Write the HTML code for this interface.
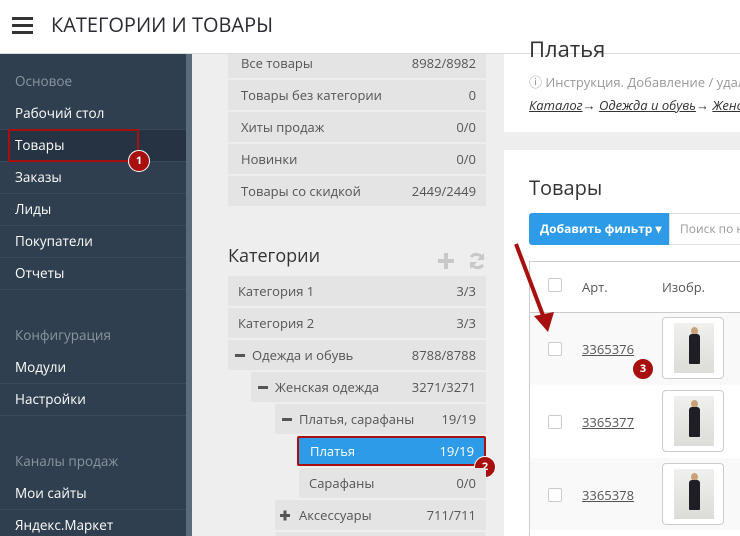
<!DOCTYPE html>
<html><head><meta charset="utf-8"><style>
*{box-sizing:border-box;margin:0;padding:0}
html{width:740px;height:536px;overflow:hidden}
body{width:740px;height:536px;overflow:hidden;background:#eeeeee;font-family:"Open Sans","Liberation Sans",sans-serif;position:relative;color:#333}
.a{position:absolute}
.hdr{left:0;top:0;width:740px;height:54px;background:#fff;border-bottom:1px solid #ddd;z-index:5}
.side{left:0;top:54px;width:186px;height:482px;background:#2f3f4f}
.scr{left:186px;top:54px;width:6px;height:482px;background:#5a6b7b}
.si{position:absolute;left:0;width:186px;height:32px;line-height:31px;padding-left:15px;color:#fff;font-size:13.5px;border-bottom:1px solid #3b4b5b}
.sh{position:absolute;left:15px;color:#8b959f;font-size:13.5px}
.row{position:absolute;height:30px;background:#e4e4e4;font-size:13px;color:#555;line-height:30px;padding:0 10px;border-radius:2px}
.row span{float:right}
.row b{display:inline-block;width:10px;height:3px;background:#555;vertical-align:middle;margin:0 7px 2px 2px}
.badge{position:absolute;width:22px;height:22px;border-radius:50%;background:#a8100f;color:#fff;font-size:11px;font-weight:bold;text-align:center;line-height:20px;border:1px solid #fff}
.cb{position:absolute;width:14px;height:14px;border:1px solid #ccc;border-radius:2px;background:#fff}
.lnk{position:absolute;font-size:13px;color:#555;text-decoration:underline}
.img{position:absolute;width:62px;height:62px;border:1px solid #ccc;border-radius:4px;background:#fff}
.img i{position:absolute;left:11px;top:5px;width:40px;height:50px;background:linear-gradient(180deg,#f0f0ee,#dcdcd8)}
.img i:before{content:"";position:absolute;left:17px;top:4px;width:7px;height:8px;border-radius:50%;background:#c9a27a}
.img i:after{content:"";position:absolute;left:15px;top:11px;width:11px;height:30px;background:#1e1e24;border-radius:3px 3px 1px 1px}
</style></head><body>
<div class="a hdr"></div>
<div class="a" style="left:529px;top:34px;font-size:22px;color:#333;z-index:6">Платья</div>
<div class="a" style="left:12px;top:17px;width:21px;height:3px;background:#333;box-shadow:0 7px 0 #333,0 14px 0 #333;z-index:6"></div>
<div class="a" style="left:51px;top:11px;font-size:20px;color:#2a2a33;z-index:6">КАТЕГОРИИ И ТОВАРЫ</div>

<div class="a side">
<div class="sh" style="top:18px">Основое</div>
<div class="si" style="top:44px">Рабочий стол</div>
<div class="si" style="top:76px;background:#253342">Товары</div>
<div class="si" style="top:108px">Заказы</div>
<div class="si" style="top:140px">Лиды</div>
<div class="si" style="top:172px">Покупатели</div>
<div class="si" style="top:204px">Отчеты</div>
<div class="sh" style="top:272px">Конфигурация</div>
<div class="si" style="top:298px">Модули</div>
<div class="si" style="top:330px">Настройки</div>
<div class="sh" style="top:398px">Каналы продаж</div>
<div class="si" style="top:424px">Мои сайты</div>
<div class="si" style="top:456px;border:none">Яндекс.Маркет</div>
</div>
<div class="a scr"></div>
<div class="a" style="left:8px;top:129px;width:131px;height:33px;border:2px solid #a8100f"></div>
<div class="badge" style="left:128px;top:150px">1</div>

<div class="row" style="left:228px;top:48px;width:258px;padding-left:13px">Все товары<span>8982/8982</span></div>
<div class="row" style="left:228px;top:80px;width:258px;padding-left:13px">Товары без категории<span>0</span></div>
<div class="row" style="left:228px;top:112px;width:258px;padding-left:13px">Хиты продаж<span>0/0</span></div>
<div class="row" style="left:228px;top:144px;width:258px;padding-left:13px">Новинки<span>0/0</span></div>
<div class="row" style="left:228px;top:176px;width:258px;padding-left:13px">Товары со скидкой<span>2449/2449</span></div>

<div class="a" style="left:228px;top:244px;font-size:18px;color:#333">Категории</div>
<svg class="a" style="left:437px;top:252px" width="18" height="18"><path d="M9 1v16M1 9h16" stroke="#c8c8c8" stroke-width="4"/></svg>
<svg class="a" style="left:467px;top:251px" width="20" height="20" viewBox="0 0 20 20"><path d="M16 8A7 7 0 0 0 4 6M4 12a7 7 0 0 0 12 2" fill="none" stroke="#c8c8c8" stroke-width="3"/><path d="M17 2v7h-7zM3 18v-7h7z" fill="#c8c8c8"/></svg>

<div class="row" style="left:228px;top:276px;width:258px">Категория 1<span>3/3</span></div>
<div class="row" style="left:228px;top:308px;width:258px">Категория 2<span>3/3</span></div>
<div class="row" style="left:228px;top:340px;width:258px;padding-left:5px"><b></b>Одежда и обувь<span>8788/8788</span></div>
<div class="row" style="left:251px;top:372px;width:235px;padding-left:5px"><b></b>Женская одежда<span>3271/3271</span></div>
<div class="row" style="left:275px;top:404px;width:211px;padding-left:5px"><b></b>Платья, сарафаны<span>19/19</span></div>
<div class="row" style="left:297px;top:436px;width:189px;background:#2d9be8;color:#fff;border:2px solid #a8100f;padding-left:11px;line-height:26px">Платья<span>19/19</span></div>
<div class="badge" style="left:474px;top:456px">2</div>
<div class="row" style="left:299px;top:468px;width:187px;padding-left:10px">Сарафаны<span>0/0</span></div>
<div class="row" style="left:275px;top:500px;width:211px;padding-left:5px"><b style="background:none;position:relative"><b style="position:absolute;left:-2px;top:0;margin:0"></b><b style="position:absolute;left:-2px;top:0;margin:0;transform:rotate(90deg)"></b></b>Аксессуары<span>711/711</span></div>
<div class="row" style="left:275px;top:532px;width:211px;height:4px"></div>

<div class="a" style="left:504px;top:54px;width:236px;height:78px;background:#fff"></div>
<div class="a" style="left:529px;top:72px;font-size:13px;color:#999;white-space:nowrap">ⓘ Инструкция. Добавление / удаление</div>
<div class="a" style="left:529px;top:96px;font-size:13px;color:#333;font-style:italic;white-space:nowrap"><u>Каталог</u>→ <u>Одежда и обувь</u>→ <u>Женская</u></div>

<div class="a" style="left:504px;top:150px;width:236px;height:386px;background:#fff"></div>
<div class="a" style="left:529px;top:174px;font-size:20px;color:#333">Товары</div>
<div class="a" style="left:529px;top:213px;width:140px;height:32px;background:#2d9be8;border-radius:3px 0 0 3px;color:#fff;font-size:12px;font-weight:bold;line-height:32px;padding-left:11px">Добавить фильтр ▾</div>
<div class="a" style="left:669px;top:213px;width:80px;height:32px;border:1px solid #ddd;color:#999;font-size:12px;line-height:30px;padding-left:10px;white-space:nowrap">Поиск по н</div>
<div class="a" style="left:529px;top:261px;width:220px;height:280px;border:1px solid #ccc;background:#fff"></div>
<div class="a" style="left:530px;top:312px;width:210px;height:1px;background:#ccc"></div>
<div class="a" style="left:530px;top:313px;width:210px;height:72px;background:#f9f9f9"></div>
<div class="a" style="left:530px;top:458px;width:210px;height:72px;background:#f9f9f9"></div>
<div class="cb" style="left:548px;top:278px"></div>
<div class="a" style="left:582px;top:278px;font-size:13px;color:#555">Арт.</div>
<div class="a" style="left:662px;top:278px;font-size:13px;color:#555">Изобр.</div>
<div class="cb" style="left:548px;top:342px"></div>
<div class="lnk" style="left:582px;top:340px">3365376</div>
<div class="img" style="left:662px;top:317px"><i></i></div>
<div class="badge" style="left:632px;top:358px">3</div>
<div class="cb" style="left:548px;top:415px"></div>
<div class="lnk" style="left:582px;top:413px">3365377</div>
<div class="img" style="left:662px;top:390px"><i></i></div>
<div class="cb" style="left:548px;top:488px"></div>
<div class="lnk" style="left:582px;top:486px">3365378</div>
<div class="img" style="left:662px;top:463px"><i></i></div>

<svg class="a" style="left:510px;top:240px" width="50" height="95"><line x1="6" y1="4" x2="34" y2="78" stroke="#a8100f" stroke-width="4"/><polygon points="24,76 44,72 38,92" fill="#a8100f"/></svg>
</body></html>
